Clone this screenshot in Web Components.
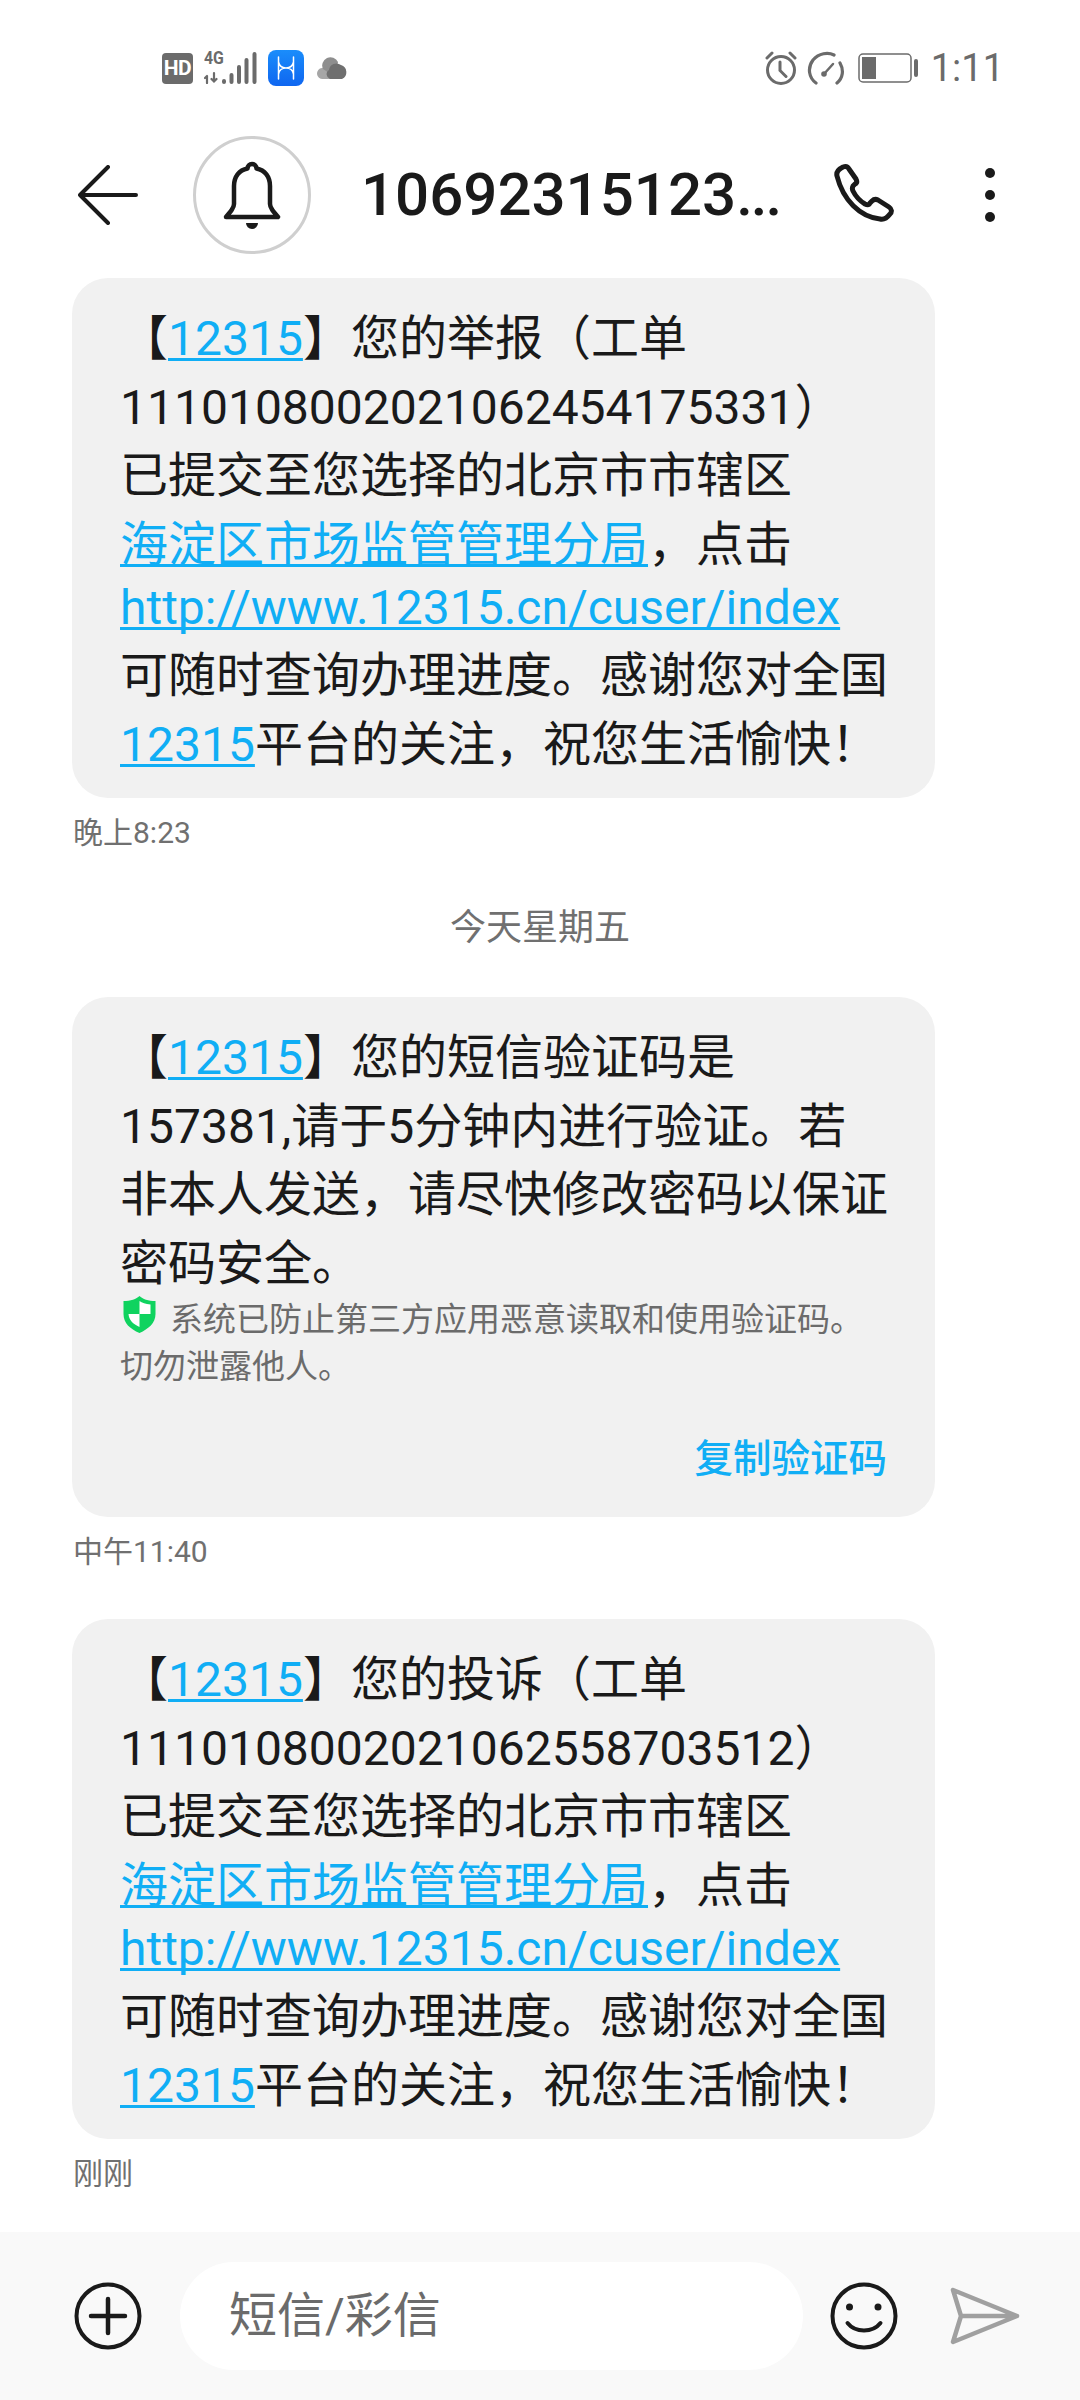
<!DOCTYPE html>
<html lang="zh">
<head>
<meta charset="utf-8">
<title>12315</title>
<style>
  html, body { margin: 0; padding: 0; background: #fff; }
  body { width: 1080px; height: 2400px; overflow: hidden; display: flex; flex-direction: column;
    font-family: Roboto, "Noto Sans CJK SC", sans-serif; text-autospace: no-autospace; text-spacing-trim: space-all; }
</style>
</head>
<body>
<status-bar></status-bar>
<chat-header number="10692315123..."></chat-header>
<message-list>
  <sms-bubble>
    <text-line>【<sms-link>12315</sms-link>】您的举报（工单</text-line>
    <text-line>1110108002021062454175331）</text-line>
    <text-line>已提交至您选择的北京市市辖区</text-line>
    <text-line><sms-link>海淀区市场监管管理分局</sms-link>，点击</text-line>
    <text-line short><sms-link>http://www.12315.cn/cuser/index</sms-link></text-line>
    <text-line>可随时查询办理进度。感谢您对全国</text-line>
    <text-line><sms-link>12315</sms-link>平台的关注，祝您生活愉快！</text-line>
  </sms-bubble>
  <time-label>晚上8:23</time-label>
  <date-divider>今天星期五</date-divider>
  <sms-bubble>
    <text-line>【<sms-link>12315</sms-link>】您的短信验证码是</text-line>
    <text-line>157381,请于5分钟内进行验证。若</text-line>
    <text-line>非本人发送，请尽快修改密码以保证</text-line>
    <text-line>密码安全。</text-line>
    <code-notice slot="extra">系统已防止第三方应用恶意读取和使用验证码。<br>切勿泄露他人。</code-notice>
  </sms-bubble>
  <time-label>中午11:40</time-label>
  <sms-bubble>
    <text-line>【<sms-link>12315</sms-link>】您的投诉（工单</text-line>
    <text-line>1110108002021062558703512）</text-line>
    <text-line>已提交至您选择的北京市市辖区</text-line>
    <text-line><sms-link>海淀区市场监管管理分局</sms-link>，点击</text-line>
    <text-line short><sms-link>http://www.12315.cn/cuser/index</sms-link></text-line>
    <text-line>可随时查询办理进度。感谢您对全国</text-line>
    <text-line><sms-link>12315</sms-link>平台的关注，祝您生活愉快！</text-line>
  </sms-bubble>
  <time-label>刚刚</time-label>
</message-list>
<compose-bar placeholder="短信/彩信"></compose-bar>

<script>
class StatusBar extends HTMLElement {
  constructor() {
    super();
    this.attachShadow({ mode: "open" });
  }
  connectedCallback() {
    this.shadowRoot.innerHTML = `
      <style>
        :host { display: flex; height: 100px; flex: none; align-items: center; box-sizing: border-box;
          padding: 36px 76px 0 162px; color: #6b6b6b; font-family: Roboto, sans-serif; }
        .hd { width: 31px; height: 31px; border-radius: 4px; background: #6b6b6b; color: #fff; font: 700 21px/31px Roboto, sans-serif;
          text-align: center; letter-spacing: -0.5px; }
        .net { position: relative; width: 54px; height: 32px; margin-left: 11px; }
        .net b { position: absolute; left: 0; top: -3px; font: 700 18px/18px Roboto, sans-serif; transform: scaleX(.88); transform-origin: left; }
        .net svg { position: absolute; left: 0; top: 0; }
        .app { margin-left: 10px; }
        .cloud { margin-left: 12px; }
        .spacer { flex: 1; }
        .time { font-size: 38px; line-height: 40px; margin-left: 13px; }
        svg { display: block; flex: none; }
      </style>
      <div class="hd">HD</div>
      <div class="net">
        <b>4G</b>
        <svg width="54" height="32" viewBox="0 0 54 32" fill="none" stroke="#6b6b6b" stroke-linecap="round">
          <path d="M3 24l-2 2M3 24v7M10 21v8m-2.500-2l2.500 2.500 2.500-2.500" stroke-width="2.200"/>
          <path d="M20 29v1M27.500 23v7M35 15v15M42.500 8v22M50.500 2v28" stroke-width="4"/>
        </svg>
      </div>
      <svg class="app" width="36" height="36" viewBox="0 0 36 36">
        <defs><linearGradient id="a" x1="0" y1="0" x2="0" y2="1"><stop offset="0" stop-color="#1a8dfb"/><stop offset="1" stop-color="#0f66f0"/></linearGradient></defs>
        <rect width="36" height="36" rx="8" fill="url(#a)"/>
        <path d="M10.500 7v22M25.500 7v22M10.500 12c1 5 4 6 7.500 6s6.500 1 7.500 6M25.500 12c-1 5-4 6-7.500 6s-6.500 1-7.500 6" fill="none" stroke="#fff" stroke-width="1.500" stroke-linecap="round"/>
      </svg>
      <svg class="cloud" width="32" height="24" viewBox="0 0 32 24">
        <path d="M7 23a5.500 5.500 0 0 1-1-11l9-1 6 12z" fill="#a6a6a6"/>
        <path d="M7 13a8 8 0 0 1 15-7l-3 15z" fill="#8e8e8e"/>
        <path d="M14 23a5 5 0 0 1-1-9 7.500 7.500 0 0 1 12-5 7.500 7.500 0 0 1 1 14z" fill="#6f6f6f"/>
      </svg>
      <div class="spacer"></div>
      <svg width="34" height="34" viewBox="0 0 34 34" fill="none" stroke="#6b6b6b" stroke-width="3" stroke-linecap="round">
        <circle cx="17" cy="19" r="13.500"/><path d="M16 11v8.500l6 6M3 7l5-5M31 7l-5-5"/>
      </svg>
      <svg style="margin-left:9px" width="38" height="34" viewBox="0 0 38 34" fill="none" stroke="#6b6b6b" stroke-width="3.200" stroke-linecap="round">
        <path d="M9 32C2 27 0 17 6 9c6-7 15-8 21-5M33 12c4 7 3 15-3 20"/>
        <path d="M17 23l9-10" stroke-width="2.500"/><circle cx="17" cy="23" r="2.800" fill="#6b6b6b" stroke="none"/>
      </svg>
      <svg style="margin-left:13px" width="60" height="30" viewBox="0 0 60 30">
        <rect x="1" y="1" width="52" height="28" rx="4" fill="#fff" stroke="#6b6b6b" stroke-width="1.500"/>
        <rect x="4" y="4" width="14" height="22" fill="#6b6b6b"/>
        <rect x="56" y="6" width="4" height="18" rx="2" fill="#6b6b6b"/>
      </svg>
      <div class="time">1:11</div>
    `;
  }
}

class ChatHeader extends HTMLElement {
  constructor() {
    super();
    this.attachShadow({ mode: "open" });
  }
  connectedCallback() {
    const number = this.getAttribute("number").replace(/\.+$/, (dots) => `<span class="more">${dots}</span>`);
    this.shadowRoot.innerHTML = `
      <style>
        :host { display: flex; flex: none; height: 178px; align-items: center; box-sizing: border-box;
          padding: 12px 0 0 78px; color: #1a1a1a; }
        svg { display: block; flex: none; }
        .avatar { width: 118px; height: 118px; margin-left: 55px; box-sizing: border-box; border-radius: 50%;
          border: 3px solid #cfcfcf; display: flex; align-items: center; justify-content: center; }
        .num { width: 423px; margin-left: 50px; font: 500 60px/64px Roboto, sans-serif; white-space: nowrap; }
        .more { letter-spacing: -2px; }
      </style>
      <svg width="60" height="60" viewBox="0 0 60 60" fill="none" stroke="#1a1a1a" stroke-width="4" stroke-linecap="round" stroke-linejoin="round">
        <path d="M30 2L2 30l28 28M2 30h56"/>
      </svg>
      <div class="avatar">
        <svg width="58" height="68" viewBox="0 0 58 68">
          <path d="M29 3a4.500 4.500 0 0 1 4.500 4.500C42 9 47 16 47 25v18c0 3 1 4 3 7l5 6H3l5-6c2-3 3-4 3-7V25c0-9 5-16 13.500-17.500A4.500 4.500 0 0 1 29 3z" fill="none" stroke="#1a1a1a" stroke-width="4.500" stroke-linejoin="round"/>
          <path d="M23 62h12a6 6 0 0 1-12 0z" fill="#1a1a1a"/>
        </svg>
      </div>
      <div class="num">${number}</div>
      <svg style="margin-left:50px" width="62" height="62" viewBox="0 0 62 62" fill="none" stroke="#1a1a1a" stroke-width="5" stroke-linejoin="round">
        <path d="M3 12c-1-4 2-7 6-9 3-1 5 0 6 2l7 10c1 2 1 4-1 5l-2 2c-1 2-1 3 0 5 3 6 7 10 12 13 2 1 4 1 5-1l2-2c2-2 4-2 6-1l11 7c3 2 3 5 1 7-3 4-6 6-10 5C26 53 9 36 3 12z"/>
      </svg>
      <svg style="margin-left:89px" width="10" height="54" viewBox="0 0 10 54" fill="#1a1a1a">
        <circle cx="5" cy="5" r="5"/><circle cx="5" cy="27" r="5"/><circle cx="5" cy="49" r="5"/>
      </svg>
    `;
  }
}

class MessageList extends HTMLElement {
  constructor() {
    super();
    this.attachShadow({ mode: "open" });
  }
  connectedCallback() {
    this.shadowRoot.innerHTML = `
      <style>
        :host { display: flex; flex-direction: column; flex: 1; min-height: 0; overflow: hidden;
          box-sizing: border-box; padding: 0 72px; }
      </style>
      <slot></slot>
    `;
  }
}

class SmsBubble extends HTMLElement {
  constructor() {
    super();
    this.attachShadow({ mode: "open" });
  }
  connectedCallback() {
    this.shadowRoot.innerHTML = `
      <style>
        :host { display: block; flex: none; width: 863px; height: 520px; box-sizing: border-box; padding: 27px 48px 0 48px;
          background: #f1f1f1; border-radius: 36px; color: #1a1a1a; }
      </style>
      <slot></slot>
      <slot name="extra"></slot>
    `;
  }
}

class TextLine extends HTMLElement {
  constructor() {
    super();
    this.attachShadow({ mode: "open" });
  }
  connectedCallback() {
    this.shadowRoot.innerHTML = `
      <style>
        :host { display: block; font: 400 48px/68.600px Roboto, "Noto Sans CJK SC", sans-serif; white-space: nowrap; }
        :host([short]) { line-height: 58px; padding-bottom: 5px; }
      </style>
      <slot></slot>
    `;
  }
}

// no whitespace around the slot here: this one is inline and it would show as a gap next to the link
class SmsLink extends HTMLElement {
  constructor() {
    super();
    this.attachShadow({ mode: "open" });
  }
  connectedCallback() {
    this.shadowRoot.innerHTML = `<style>
        :host { display: inline; color: #10aef5; text-decoration: underline; text-decoration-thickness: 3px; text-underline-offset: 3px; text-decoration-skip-ink: none; }
      </style><slot></slot>`;
  }
}

class TimeLabel extends HTMLElement {
  constructor() {
    super();
    this.attachShadow({ mode: "open" });
  }
  connectedCallback() {
    this.shadowRoot.innerHTML = `
      <style>
        :host { display: block; flex: none; padding-left: 1px; margin: 13px 0 45px; height: 44px; color: #707070;
          font: 400 30px/44px Roboto, "Noto Sans CJK SC", sans-serif; }
      </style>
      <slot></slot>
    `;
  }
}

class DateDivider extends HTMLElement {
  constructor() {
    super();
    this.attachShadow({ mode: "open" });
  }
  connectedCallback() {
    this.shadowRoot.innerHTML = `
      <style>
        :host { display: block; flex: none; margin: 3px -72px 44px; text-align: center; height: 50px; color: #707070;
          font: 400 36px/50px Roboto, "Noto Sans CJK SC", sans-serif; }
      </style>
      <slot></slot>
    `;
  }
}

class CodeNotice extends HTMLElement {
  constructor() {
    super();
    this.attachShadow({ mode: "open" });
  }
  connectedCallback() {
    this.shadowRoot.innerHTML = `
      <style>
        :host { display: block; position: relative; margin-top: -2px; font: 400 33px/47px Roboto, "Noto Sans CJK SC", sans-serif; color: #6b6b6b; }
        .txt { text-indent: 50px; white-space: nowrap; }
        svg { position: absolute; left: 3px; top: 0; }
        .copy { margin-top: 41px; text-align: right; font: 500 38.500px/56px Roboto, "Noto Sans CJK SC", sans-serif; color: #10aef5; }
      </style>
      <svg width="33" height="37" viewBox="0 0 33 37">
        <path d="M16.500 0c3 3 9 5 16 5v13c0 9-7 15-16 19C7 33 .5 27 .5 18V5c7 0 13-2 16-5z" fill="#0fd35f"/>
        <path d="M16.500 5c2.500 2 6 3 11 3.500V18H16.500zM16.500 18v13C10 28 6 24 5.500 18z" fill="#fff"/>
      </svg>
      <div class="txt"><slot></slot></div>
      <div class="copy">复制验证码</div>
    `;
  }
}

class ComposeBar extends HTMLElement {
  constructor() {
    super();
    this.attachShadow({ mode: "open" });
  }
  connectedCallback() {
    this.shadowRoot.innerHTML = `
      <style>
        :host { display: flex; flex: none; height: 168px; align-items: center; box-sizing: border-box;
          padding: 0 0 0 74px; background: #f9f9f9; }
        svg { display: block; flex: none; }
        .field { width: 623px; height: 108px; margin-left: 38px; border-radius: 54px; background: #fff; box-sizing: border-box;
          padding-left: 49px; color: #6b6b6b; font: 400 48px/108px Roboto, "Noto Sans CJK SC", sans-serif; }
      </style>
      <svg width="68" height="68" viewBox="0 0 68 68" fill="none" stroke="#1a1a1a" stroke-width="4" stroke-linecap="round">
        <circle cx="34" cy="34" r="31.500"/><path d="M17 34h34M34 17v34" stroke-width="4.500"/>
      </svg>
      <div class="field">${this.getAttribute("placeholder")}</div>
      <svg style="margin-left:27px" width="68" height="68" viewBox="0 0 68 68" fill="none" stroke="#1a1a1a" stroke-width="4" stroke-linecap="round">
        <circle cx="34" cy="34" r="31.500"/><path d="M17.500 41c8 10 25 10 33 0"/>
        <circle cx="19.500" cy="25" r="3.500" fill="#1a1a1a" stroke="none"/><circle cx="48" cy="25" r="3.500" fill="#1a1a1a" stroke="none"/>
      </svg>
      <svg style="margin-left:52px" width="70" height="58" viewBox="0 0 70 58" fill="none" stroke="#a0a0a0" stroke-width="4.500" stroke-linecap="round" stroke-linejoin="round">
        <path d="M3 3l64 26L3 55l8-26zM11 29h56"/>
      </svg>
    `;
  }
}

customElements.define("status-bar", StatusBar);
customElements.define("chat-header", ChatHeader);
customElements.define("message-list", MessageList);
customElements.define("sms-bubble", SmsBubble);
customElements.define("text-line", TextLine);
customElements.define("sms-link", SmsLink);
customElements.define("time-label", TimeLabel);
customElements.define("date-divider", DateDivider);
customElements.define("code-notice", CodeNotice);
customElements.define("compose-bar", ComposeBar);
</script>
</body>
</html>
